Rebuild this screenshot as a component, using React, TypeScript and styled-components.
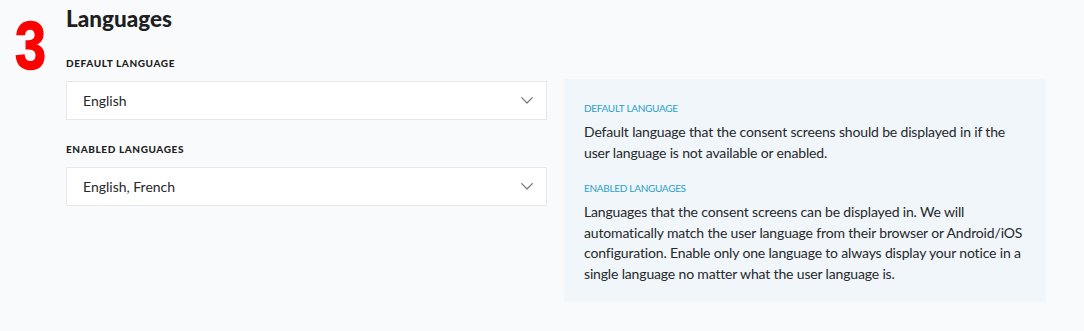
import styled, { createGlobalStyle } from "styled-components";

const GlobalStyle = createGlobalStyle`
  body {
    margin: 0;
    background: #f9fafc;
    font-family: Lato, "Open Sans", sans-serif;
  }
`;

const Chevron = () => (
  <svg width="12" height="7" viewBox="0 0 12 7" fill="none">
    <path d="M0.7 0.7l5.3 5.3 5.3-5.3" stroke="#72767c" strokeWidth="1.2" strokeLinecap="round" strokeLinejoin="round" />
  </svg>
);

const help = [
  {
    title: "Default language",
    text: "Default language that the consent screens should be displayed in if the user language is not available or enabled.",
  },
  {
    title: "Enabled languages",
    text: "Languages that the consent screens can be displayed in. We will automatically match the user language from their browser or Android/iOS configuration. Enable only one language to always display your notice in a single language no matter what the user language is.",
  },
];

const App = () => {
  return (
    <>
      <GlobalStyle />
      <Page>
        <StepNumber>3</StepNumber>
        <Section>
          <Title>Languages</Title>
          <Columns>
            <Form>
              <Field>
                <Label>Default language</Label>
                <Select>
                  <span>English</span>
                  <Chevron />
                </Select>
              </Field>
              <Field>
                <Label>Enabled languages</Label>
                <Select>
                  <span>English, French</span>
                  <Chevron />
                </Select>
              </Field>
            </Form>
            <HelpPanel>
              {help.map((item) => (
                <HelpItem key={item.title}>
                  <HelpTitle>{item.title}</HelpTitle>
                  <HelpText>{item.text}</HelpText>
                </HelpItem>
              ))}
            </HelpPanel>
          </Columns>
        </Section>
      </Page>
    </>
  );
};

export default App;

const Page = styled.div`
  display: flex;
  padding: 6px 38px 29px 15px;
  min-height: 331px;
  box-sizing: border-box;
`;

const StepNumber = styled.div`
  width: 51px;
  margin-top: 6px;
  font-family: "Liberation Sans", sans-serif;
  font-weight: 700;
  font-size: 68px;
  line-height: 66px;
  color: #ff0000;
  transform: scaleX(0.82);
  transform-origin: left top;
  -webkit-text-stroke: 1.5px #ff0000;
`;

const Section = styled.div`
  flex: 1;
  display: flex;
  flex-direction: column;
`;

const Title = styled.h2`
  margin: 0 0 30px;
  font-family: Lato, sans-serif;
  font-weight: 900;
  font-size: 22.5px;
  line-height: 26px;
  color: #1d1f22;
`;

const Columns = styled.div`
  display: flex;
  gap: 17px;
  align-items: flex-start;
`;

const Form = styled.div`
  width: 481px;
  display: flex;
  flex-direction: column;
  gap: 22px;
  margin-top: -6px;
`;

const Field = styled.div`
  display: flex;
  flex-direction: column;
  gap: 11px;
`;

const Label = styled.div`
  font-size: 10px;
  font-weight: 900;
  letter-spacing: 0.6px;
  text-transform: uppercase;
  color: #1d1f22;
  line-height: 14px;
`;

const Select = styled.div`
  height: 39px;
  box-sizing: border-box;
  display: flex;
  align-items: center;
  justify-content: space-between;
  padding: 0 13px 0 16px;
  background: #ffffff;
  border: 1px solid #e6e8eb;
  font-size: 14px;
  color: #26282b;
`;

const HelpPanel = styled.div`
  flex: 1;
  margin-top: 17px;
  padding: 22px 20px 18px;
  background: #f0f6fa;
  display: flex;
  flex-direction: column;
  gap: 18px;
`;

const HelpItem = styled.div`
  display: flex;
  flex-direction: column;
  gap: 7px;
`;

const HelpTitle = styled.div`
  font-size: 10px;
  letter-spacing: -0.3px;
  text-transform: uppercase;
  color: #2a9fcc;
  line-height: 14px;
`;

const HelpText = styled.p`
  margin: 0;
  font-size: 14px;
  letter-spacing: -0.16px;
  line-height: 20.5px;
  color: #26282b;
`;
